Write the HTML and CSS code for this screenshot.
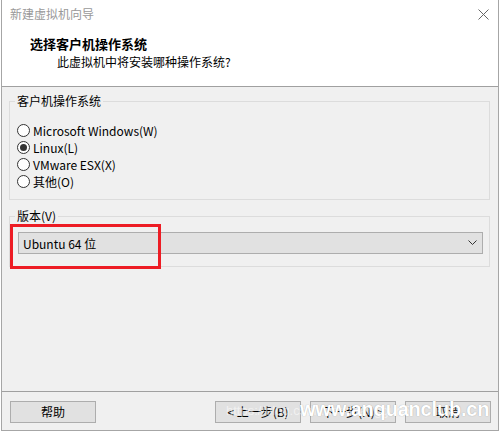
FILE: index.html
```html
<!DOCTYPE html>
<html lang="zh-CN">
<head>
<meta charset="utf-8">
<title>新建虚拟机向导</title>
<link rel="stylesheet" href="styles.css">
</head>
<body>
<div class="frame">
  <div class="top">
    <div class="titlebar">
      <span class="title">新建虚拟机向导</span>
      <svg class="close" width="11" height="11" viewBox="0 0 11 11"><path d="M0.5 0.5 L10.5 10.5 M10.5 0.5 L0.5 10.5" stroke="#666" stroke-width="1" fill="none"/></svg>
    </div>
    <div class="header">
      <div class="h-title">选择客户机操作系统</div>
      <div class="h-sub">此虚拟机中将安装哪种操作系统?</div>
    </div>
  </div>
  <div class="content">
    <fieldset class="group os">
      <legend>客户机操作系统</legend>
      <label class="radio"><span class="dot"></span>Microsoft Windows(W)</label>
      <label class="radio"><span class="dot checked"></span>Linux(L)</label>
      <label class="radio"><span class="dot"></span>VMware ESX(X)</label>
      <label class="radio"><span class="dot"></span>其他(O)</label>
    </fieldset>
    <fieldset class="group ver">
      <legend>版本(V)</legend>
      <div class="combo">
        <span>Ubuntu 64 位</span>
        <svg width="9" height="6" viewBox="0 0 9 6"><path d="M0.5 0.5 L4.5 4.5 L8.5 0.5" stroke="#333" stroke-width="1" fill="none"/></svg>
      </div>
    </fieldset>
  </div>
  <div class="footer">
    <button class="btn">帮助</button>
    <div class="nav">
      <button class="btn">&lt; 上一步(B)</button>
      <button class="btn">下一步(N) &gt;</button>
      <button class="btn">取消</button>
    </div>
  </div>
</div>
<div class="highlight"></div>
<div class="wm-faint">https://blog.csdn.net/zhangguo5</div>
<div class="wm">www.anquanclub.cn</div>
</body>
</html>
```
FILE: styles.css
```css
html, body {
  margin: 0;
  padding: 0;
}
body {
  width: 500px;
  height: 432px;
  background: #ffffff;
  font-family: "Noto Sans CJK SC", "Noto Sans", sans-serif;
  font-size: 12px;
  color: #000;
  position: relative;
  overflow: hidden;
}
.frame {
  margin-left: 1px;
  width: 498px;
  height: 431px;
  box-sizing: border-box;
  border-left: 1px solid #a6a6a6;
  border-right: 1px solid #a6a6a6;
  border-bottom: 1px solid #a6a6a6;
  background: #f0f0f0;
  display: flex;
  flex-direction: column;
}
.top {
  background: #fff;
  border-bottom: 1px solid #a0a0a0;
}
.titlebar {
  height: 30px;
  display: flex;
  align-items: center;
  justify-content: space-between;
  padding: 0 9px 2px 8px;
  box-sizing: border-box;
}
.title {
  color: #999;
  font-size: 12px;
  line-height: 16px;
}
.close {
  display: block;
}
.header {
  padding: 5px 0 15px 28px;
}
.h-title {
  font-weight: bold;
  font-size: 13px;
  line-height: 18px;
}
.h-sub {
  padding-left: 27px;
  line-height: 18px;
}
.content {
  flex: 1;
  display: flex;
  flex-direction: column;
}
.group {
  margin: 0 8px 0 7px;
  border: 1px solid #dcdcdc;
  min-inline-size: 0;
}
.group legend {
  padding: 0 2px;
  line-height: 16px;
  margin-left: -2px;
}
.os {
  margin-top: 6px;
  padding: 13px 7px 9px 7px;
  display: flex;
  flex-direction: column;
}
.ver {
  margin-top: 8px;
  padding: 8px 6px 12px 8px;
}
.ver legend {
  margin-left: -3px;
}
.radio {
  display: flex;
  align-items: center;
  height: 17px;
  line-height: 17px;
}
.dot {
  width: 13px;
  height: 13px;
  box-sizing: border-box;
  border: 1px solid #333;
  border-radius: 50%;
  background: #fff;
  margin-right: 3px;
  display: flex;
  align-items: center;
  justify-content: center;
}
.dot.checked::after {
  content: "";
  width: 7px;
  height: 7px;
  border-radius: 50%;
  background: #333;
}
.combo {
  height: 22px;
  box-sizing: border-box;
  border: 1px solid #adadad;
  background: #e1e1e1;
  display: flex;
  align-items: center;
  justify-content: space-between;
  padding: 0 5px 0 4px;
}
.footer {
  border-top: 1px solid #a0a0a0;
  padding: 9px 7px 7px 8px;
  display: flex;
  justify-content: space-between;
}
.nav {
  display: flex;
  gap: 9px;
}
.btn {
  width: 86px;
  height: 22px;
  box-sizing: border-box;
  border: 1px solid #adadad;
  background: #e1e1e1;
  font-family: "Noto Sans CJK SC", "Noto Sans", sans-serif;
  font-size: 12px;
  line-height: 16px;
  padding: 0;
  color: #000;
}
.highlight {
  position: absolute;
  left: 10px;
  top: 224px;
  width: 151px;
  height: 45px;
  box-sizing: border-box;
  border: 3px solid #ed1c24;
}
.wm {
  position: absolute;
  left: 300px;
  top: 397px;
  font-family: "Liberation Sans", Arial, sans-serif;
  font-weight: bold;
  font-size: 20px;
  line-height: 24px;
  letter-spacing: -0.2px;
  color: #fff;
  text-shadow: 0 0 1px rgba(0,0,0,0.35);
}
.wm-faint {
  position: absolute;
  left: 226px;
  top: 402px;
  font-family: "Liberation Sans", Arial, sans-serif;
  font-size: 13px;
  line-height: 18px;
  color: rgba(255,255,255,0.55);
}
```
